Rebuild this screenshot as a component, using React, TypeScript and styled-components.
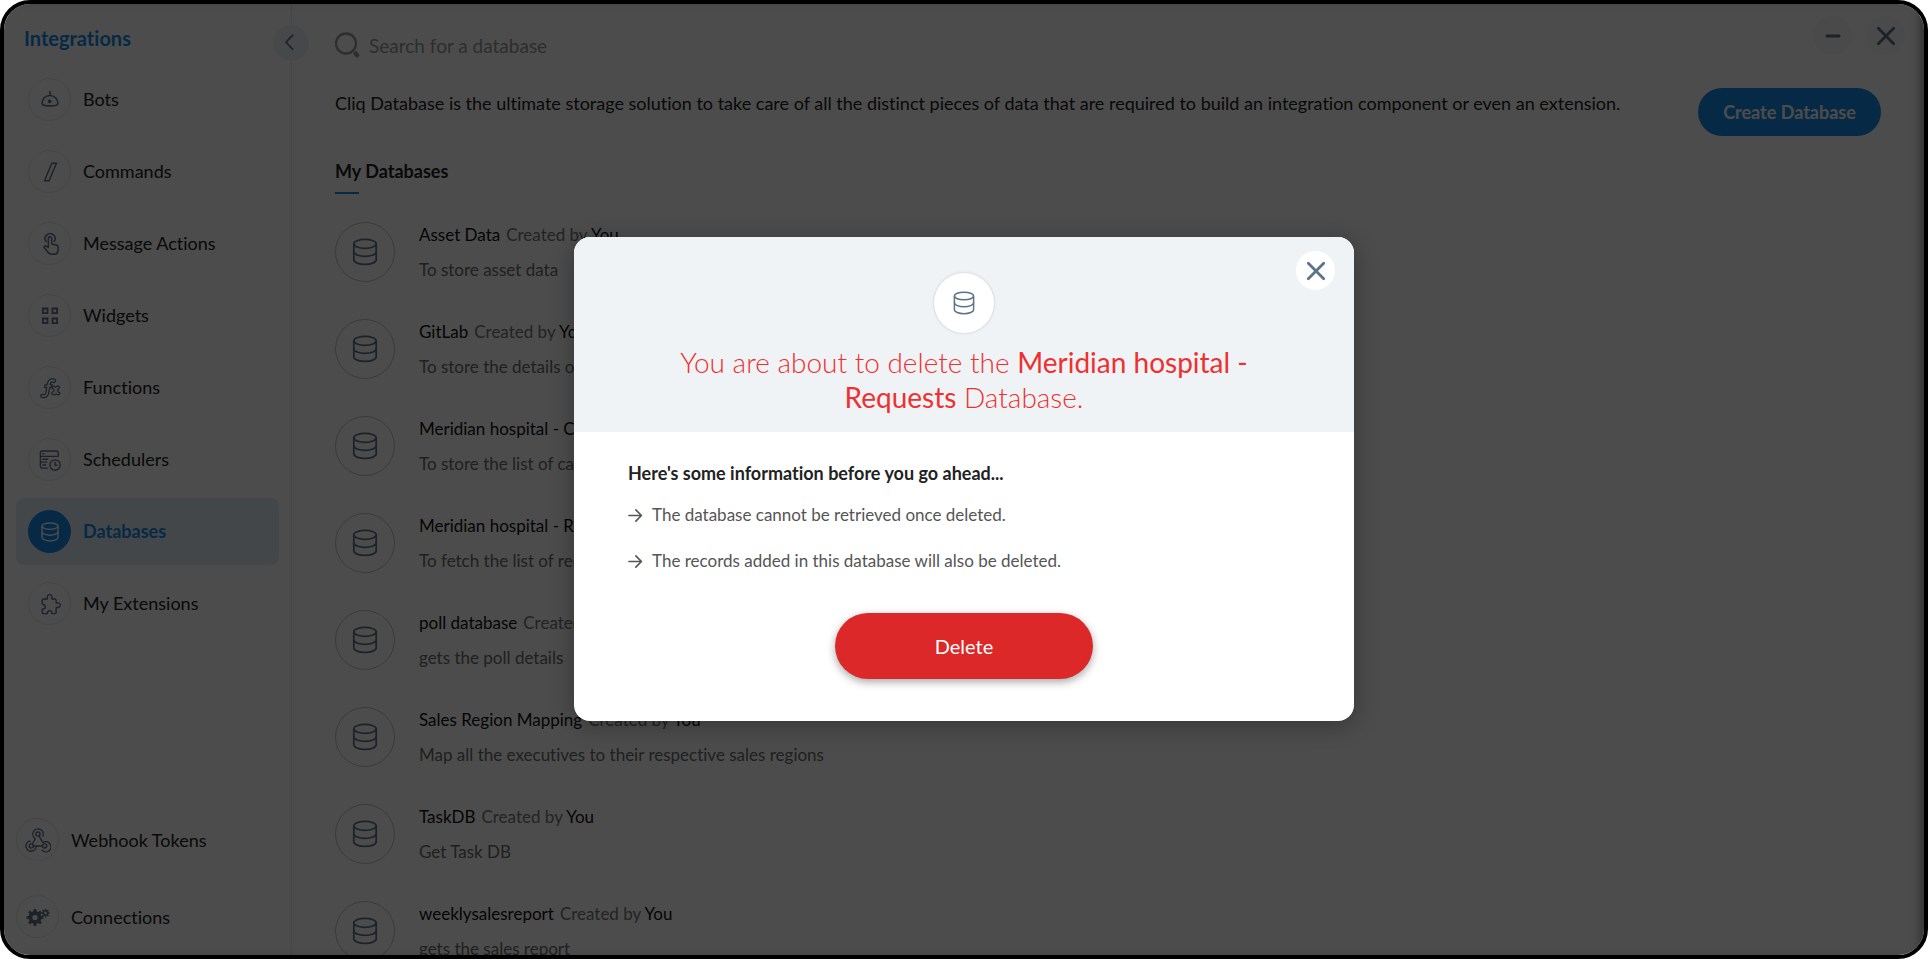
import React from 'react';
import styled, { createGlobalStyle, css } from 'styled-components';

const GlobalStyle = createGlobalStyle`
  *, *::before, *::after { box-sizing: border-box; }
  body {
    margin: 0;
    background: #fff;
    font-family: Lato, "Open Sans", sans-serif;
    font-variant-ligatures: none;
    color: #222;
  }
  h1, h2, h3, p, ul { margin: 0; padding: 0; }
  ul { list-style: none; }
  button, input { font: inherit; border: 0; padding: 0; background: none; color: inherit; }
  button { cursor: pointer; }
  a { color: inherit; text-decoration: none; }
`;

const blue = '#148ce8';
const slate = '#5f7388';

const Frame = styled.div`
  position: relative;
  display: flex;
  height: 100vh;
  min-height: 600px;
  border: 4px solid #000;
  border-radius: 30px;
  overflow: hidden;
  background: #fff;
`;

const Sidebar = styled.aside`
  position: relative;
  display: flex;
  flex-direction: column;
  flex: 0 0 288px;
  padding: 19px 12px 17px;
  border-right: 1px solid #e6e6e6;
`;

const Brand = styled.h1`
  padding: 0 8px;
  font-size: 20px;
  line-height: 30px;
  font-weight: 700;
  color: ${blue};
`;

const Collapse = styled.button`
  position: absolute;
  top: 21px;
  right: -18px;
  display: grid;
  place-items: center;
  width: 36px;
  height: 36px;
  border-radius: 50%;
  background: #edf2f8;
  color: ${slate};
`;

const NavList = styled.ul`
  display: flex;
  flex-direction: column;
  gap: 5px;
  margin-top: 13px;
`;

const FooterList = styled.ul`
  display: flex;
  flex-direction: column;
  gap: 34px;
  margin-top: auto;
`;

const NavLink = styled.a<{ $active?: boolean; $compact?: boolean }>`
  display: flex;
  align-items: center;
  gap: 12px;
  height: ${(p) => (p.$compact ? '43px' : '67px')};
  padding: ${(p) => (p.$compact ? '0' : '0 12px')};
  border-radius: 8px;
  font-size: 18px;
  line-height: 24px;
  ${(p) =>
    p.$active &&
    css`
      background: #e5eff8;
      color: ${blue};
      font-weight: 700;
    `}
`;

const NavLabel = styled.span<{ $compact?: boolean }>`
  padding-bottom: ${(p) => (p.$compact ? '0' : '2px')};
`;

const NavIcon = styled.span<{ $active?: boolean }>`
  display: grid;
  place-items: center;
  width: 43px;
  height: 43px;
  border: 1px solid ${(p) => (p.$active ? blue : '#e6e8ea')};
  border-radius: 50%;
  background: ${(p) => (p.$active ? blue : 'transparent')};
  color: ${(p) => (p.$active ? '#fff' : slate)};
`;

const Main = styled.main`
  flex: 1;
  min-width: 0;
  padding: 12px 0 0 43px;
`;

const TopBar = styled.div`
  display: flex;
  justify-content: space-between;
  align-items: flex-start;
  padding-right: 19px;
`;

const Search = styled.label`
  display: flex;
  align-items: center;
  gap: 9px;
  flex: 1;
  padding-top: 10px;
  color: #999;
`;

const SearchInput = styled.input`
  flex: 1;
  height: 40px;
  padding-bottom: 2px;
  font-size: 19px;
  outline: 0;
  &::placeholder { color: #999; opacity: 1; }
`;

const WindowControls = styled.div`
  display: flex;
  gap: 14px;
`;

const RoundButton = styled.button<{ $bg: string }>`
  display: grid;
  place-items: center;
  width: 39px;
  height: 39px;
  border-radius: 50%;
  background: ${(p) => p.$bg};
  color: ${slate};
`;

const Intro = styled.div`
  display: flex;
  justify-content: space-between;
  align-items: flex-start;
  gap: 24px;
  margin-top: 22px;
  padding-right: 43px;
`;

const IntroText = styled.p`
  font-size: 18px;
  line-height: 30px;
`;

const CreateButton = styled.button`
  flex: none;
  width: 183px;
  height: 48px;
  border-radius: 24px;
  background: ${blue};
  color: #fff;
  font-size: 18px;
  font-weight: 700;
`;

const SectionTitle = styled.h2`
  margin-top: 23px;
  font-size: 18px;
  line-height: 24px;
  font-weight: 700;
  &::after {
    content: '';
    display: block;
    width: 24px;
    height: 2px;
    margin-top: 9px;
    background: ${blue};
  }
`;

const DatabaseList = styled.ul`
  display: flex;
  flex-direction: column;
  gap: 27px;
  margin-top: 23px;
`;

const DatabaseRow = styled.li`
  display: flex;
  align-items: center;
  gap: 24px;
  height: 70px;
`;

const DatabaseBadge = styled.span`
  display: grid;
  place-items: center;
  width: 60px;
  height: 60px;
  border: 1px solid #c4c4c4;
  border-radius: 50%;
  color: ${slate};
`;

const RowText = styled.p<{ $muted?: boolean }>`
  font-size: 17px;
  line-height: 35px;
  color: ${(p) => (p.$muted ? '#6b6b6b' : '#111')};
`;

const Meta = styled.span`
  margin-left: 6px;
  color: #777;
`;

const Owner = styled.span`
  color: #111;
`;

const Overlay = styled.div`
  position: absolute;
  inset: 0;
  display: flex;
  align-items: center;
  justify-content: center;
  padding-bottom: 1px;
  background: rgba(0, 0, 0, 0.7);
  box-shadow: inset -8px 0 8px -4px rgba(0, 0, 0, 0.35);
`;

const Dialog = styled.section`
  position: relative;
  width: 780px;
  max-width: 90%;
  border-radius: 16px;
  overflow: hidden;
  background: #fff;
  box-shadow: 0 4px 24px rgba(0, 0, 0, 0.3);
`;

const DialogHeader = styled.header`
  display: flex;
  flex-direction: column;
  align-items: center;
  padding: 36px 96px 17px;
  background: #eff3f6;
`;

const DialogBadge = styled.span`
  display: grid;
  place-items: center;
  width: 60px;
  height: 60px;
  border-radius: 50%;
  background: #fff;
  color: ${slate};
  box-shadow: 0 0 3px rgba(0, 0, 0, 0.18);
`;

const DialogTitle = styled.h2`
  margin-top: 12px;
  font-size: 28px;
  line-height: 35px;
  font-weight: 300;
  text-align: center;
  color: #ef3030;
  strong { font-weight: 400; }
`;

const CloseSlot = styled.div`
  position: absolute;
  top: 14px;
  right: 19px;
`;

const DialogBody = styled.div`
  display: flex;
  flex-direction: column;
  padding: 29px 54px 42px;
`;

const InfoTitle = styled.h3`
  font-size: 18px;
  line-height: 24px;
  font-weight: 700;
`;

const InfoList = styled.ul`
  display: flex;
  flex-direction: column;
  gap: 22px;
  margin-top: 18px;
`;

const InfoItem = styled.li`
  display: flex;
  align-items: center;
  gap: 9px;
  font-size: 17px;
  line-height: 24px;
  color: #555;
`;

const DeleteButton = styled.button`
  align-self: center;
  width: 258px;
  height: 66px;
  margin-top: 40px;
  border-radius: 33px;
  background: #dc2828;
  color: #fff;
  font-size: 20px;
  box-shadow: 0 3px 8px rgba(0, 0, 0, 0.35);
`;

type IconProps = { size?: number; weight?: number; children?: React.ReactNode };

const Icon = ({ size = 24, weight = 1.5, children }: IconProps) => (
  <svg width={size} height={size} viewBox="0 0 24 24" fill="none" stroke="currentColor" strokeWidth={weight} strokeLinecap="round" strokeLinejoin="round" aria-hidden="true">
    {children}
  </svg>
);

const DatabaseIcon = ({ size = 24, weight = 1.5 }: IconProps) => (
  <Icon size={size} weight={weight}>
    <ellipse cx="12" cy="5" rx="9.6" ry="3.8" />
    <path d="M2.400 5v13.700c0 2.200 4.300 4 9.600 4s9.600-1.800 9.600-4V5" />
    <path d="M2.400 11.800c0 2.200 4.300 4 9.600 4s9.600-1.800 9.600-4" />
  </Icon>
);

const BotIcon = () => (
  <Icon size={20} weight={1.9}>
    <path d="M12 6V2" />
    <path d="M2.5 16.500c0-6 4-10 9.500-10s9.500 4 9.500 10c0 1.600-3 2.500-9.500 2.500s-9.500-.9-9.500-2.500z" />
    <circle cx="11.500" cy="13.500" r="1.300" fill="currentColor" />
  </Icon>
);

const SlashIcon = () => (
  <Icon size={22} weight={1.6}>
    <path d="M14 2.500h5L11 21.500H6z" strokeLinejoin="miter" />
  </Icon>
);

const TapIcon = () => (
  <Icon size={24} weight={1.500}>
    <path d="M8 9.500a5 5 0 1 1 8.200 0" />
    <path d="M10.300 15.500V6.400a1.700 1.700 0 0 1 3.400 0v5.500l4.500 1c1.400.3 2.200 1.300 2.100 2.600l-.4 3.400c-.2 1.900-1.500 3.300-3.300 3.300h-3.200c-1.300 0-2.400-.6-3.100-1.700L6.200 15.800c-.7-1.200.6-2.400 1.800-1.700z" />
  </Icon>
);

const WidgetsIcon = () => (
  <Icon size={20} weight={2.200}>
    <path d="M3.500 3h5.500v5.500h-5.500zM15 3h5.500v5.500h-5.500zM3.500 15h5.500v5.500h-5.500zM15 15h5.500v5.500h-5.500z" strokeLinejoin="miter" />
  </Icon>
);

const FunctionIcon = () => (
  <Icon size={22} weight={1.400}>
    <path d="M17.300 2.500c-4-1.600-7.200.1-8 4l-.4 2H6.600l-.5 2.700h2.300l-1.100 6c-.3 1.900-1.300 2.400-2.800 1.900-1.300-.4-2.600.3-2.600 1.500 0 1.600 1.800 2 3.600 1.900 3-.2 4.500-2 5-4.900l1.200-6.400h2.300l.5-2.700h-2.300l.3-1.400c.3-1.500 1.300-1.900 2.700-1.400 1.300.5 2.400-.1 2.800-1.100.4-.9.100-1.700-.7-2.100z" />
    <path d="M14.300 11.200c.7-1.900 2.900-1.500 3.800 0 .9-1.300 2.600-1.900 3.800-.8 1 1 .2 2.300-1.100 2.800l-.7 1.300 1 1.900c1.400.1 1.900 1 1.400 2-.7 1.400-2.800 1.400-3.900-.3-1.200 1.500-3 2-4.200.9-1.100-1.100-.4-2.400 1.200-2.900l.8-1.400-.8-1.600c-1-.2-1.600-.9-1.300-1.900z" />
  </Icon>
);

const SchedulerIcon = () => (
  <Icon size={22} weight={1.500}>
    <path d="M21 8V4a1.800 1.800 0 0 0-1.800-1.800H3.300A1.800 1.800 0 0 0 1.500 4v15a1.800 1.800 0 0 0 1.800 1.800H9M1.500 8H21M1.500 14.300h7M4.300 5.200h1M4.300 11.200h5.200M4.300 17.500h3" />
    <circle cx="17.500" cy="17.500" r="5.700" />
    <path d="M17.500 14.300v3.400h2.200" />
  </Icon>
);

const PuzzleIcon = () => (
  <Icon size={22} weight={1.500}>
    <path d="M5 6.500h3.800c.5 0 .7-.4.5-.9-.9-1.900.3-3.800 2.300-3.800s3.200 1.900 2.300 3.800c-.2.5 0 .9.500.9h2.800c.9 0 1.500.6 1.500 1.500v2.500c0 .5.400.7.900.5 1.800-.8 3.600.4 3.600 2.300s-1.800 3.100-3.600 2.300c-.5-.2-.9 0-.9.500v5c0 .9-.6 1.400-1.500 1.400h-2.400c-.5 0-.8-.3-.8-.8 0-1.500-.9-2.500-2.300-2.500s-2.400 1-2.400 2.500c0 .5-.3.800-.8.800H5c-.9 0-1.500-.6-1.500-1.400v-3c0-.5.300-.7.800-.7 1.500-.1 2.500-1.100 2.500-2.500s-1-2.400-2.500-2.500c-.5 0-.8-.3-.8-.8V8c0-.9.600-1.500 1.500-1.500z" />
  </Icon>
);

const WebhookIcon = () => (
  <Icon size={26} weight={1.300}>
    <circle cx="12" cy="6.500" r="1.900" />
    <circle cx="5.800" cy="17.500" r="1.900" />
    <circle cx="18.200" cy="17.500" r="1.900" />
    <path d="M16.400 8.500A4.800 4.800 0 1 0 9.500 10.600L7 15.500M13 8.400l3.500 6.100A4.700 4.700 0 1 1 15.800 21.500M7.900 17.500h8.100M4.500 12.900A4.800 4.800 0 1 0 10.500 17.500" />
  </Icon>
);

const gear = (cx: number, cy: number, outer: number, inner: number) => {
  const teeth = 8;
  const points: string[] = [];
  for (let i = 0; i < teeth; i++) {
    [[-0.3, inner], [-0.2, outer], [0.2, outer], [0.3, inner]].forEach(([offset, r]) => {
      const a = ((i + offset) / teeth) * Math.PI * 2;
      points.push((cx + Math.cos(a) * r).toFixed(2) + ' ' + (cy + Math.sin(a) * r).toFixed(2));
    });
  }
  return 'M' + points.join('L') + 'z';
};

const ring = (cx: number, cy: number, r: number) =>
  `M${cx - r} ${cy}a${r} ${r} 0 1 0 ${r * 2} 0a${r} ${r} 0 1 0 ${-r * 2} 0z`;

const GearsIcon = () => (
  <svg width={24} height={24} viewBox="0 0 24 24" fill="currentColor" fillRule="evenodd" aria-hidden="true">
    <path d={gear(9, 12.500, 8.500, 6.500) + ring(9, 12.500, 2.600)} />
    <path d={gear(19.500, 8, 4.200, 3) + ring(19.500, 8, 1.400)} />
  </svg>
);

const SearchIcon = () => (
  <svg width={25} height={28} viewBox="0 0 25 28" fill="none" stroke="currentColor" strokeLinecap="round" aria-hidden="true">
    <circle cx="11" cy="11.500" r="10" strokeWidth="2.300" />
    <path d="M20.700 21.500l1.300 1.700" strokeWidth="4.500" />
  </svg>
);

const CloseIcon = () => (
  <Icon size={24} weight={2.800}>
    <path d="M4.300 4.300l15.400 15.400M19.700 4.300L4.300 19.700" />
  </Icon>
);

const navItems = [
  { label: 'Bots', icon: <BotIcon /> },
  { label: 'Commands', icon: <SlashIcon /> },
  { label: 'Message Actions', icon: <TapIcon /> },
  { label: 'Widgets', icon: <WidgetsIcon /> },
  { label: 'Functions', icon: <FunctionIcon /> },
  { label: 'Schedulers', icon: <SchedulerIcon /> },
  { label: 'Databases', icon: <DatabaseIcon size={20} weight={1.700} />, active: true },
  { label: 'My Extensions', icon: <PuzzleIcon /> },
];

const footerItems = [
  { label: 'Webhook Tokens', icon: <WebhookIcon /> },
  { label: 'Connections', icon: <GearsIcon /> },
];

const databases = [
  { name: 'Asset Data', description: 'To store asset data' },
  { name: 'GitLab', description: 'To store the details of the commits' },
  { name: 'Meridian hospital - Cases', description: 'To store the list of cases' },
  { name: 'Meridian hospital - Requests', description: 'To fetch the list of requests' },
  { name: 'poll database', description: 'gets the poll details' },
  { name: 'Sales Region Mapping', description: 'Map all the executives to their respective sales regions' },
  { name: 'TaskDB', description: 'Get Task DB' },
  { name: 'weeklysalesreport', description: 'gets the sales report' },
];

const warnings = [
  'The database cannot be retrieved once deleted.',
  'The records added in this database will also be deleted.',
];

export default function App() {
  return (
    <>
      <GlobalStyle />
      <Frame>
        <Sidebar>
          <Brand>Integrations</Brand>
          <NavList>
            {navItems.map((item) => (
              <li key={item.label}>
                <NavLink href="#" $active={item.active}>
                  <NavIcon $active={item.active}>{item.icon}</NavIcon>
                  <NavLabel>{item.label}</NavLabel>
                </NavLink>
              </li>
            ))}
          </NavList>
          <FooterList>
            {footerItems.map((item) => (
              <li key={item.label}>
                <NavLink href="#" $compact>
                  <NavIcon>{item.icon}</NavIcon>
                  <NavLabel $compact>{item.label}</NavLabel>
                </NavLink>
              </li>
            ))}
          </FooterList>
          <Collapse aria-label="Collapse sidebar">
            <Icon size={20} weight={2}>
              <path d="M14 2.500L6 11l8 8.500" />
            </Icon>
          </Collapse>
        </Sidebar>
        <Main>
          <TopBar>
            <Search>
              <SearchIcon />
              <SearchInput type="text" aria-label="Search for a database" placeholder="Search for a database" />
            </Search>
            <WindowControls>
              <RoundButton $bg="#f7f7f7" aria-label="Minimize">
                <Icon size={24} weight={3}>
                  <path d="M6 12h12" />
                </Icon>
              </RoundButton>
              <RoundButton $bg="#f7f7f7" aria-label="Close">
                <CloseIcon />
              </RoundButton>
            </WindowControls>
          </TopBar>
          <Intro>
            <IntroText>
              Cliq Database is the ultimate storage solution to take care of all the distinct pieces of data that are required to build an integration component or even an extension.
            </IntroText>
            <CreateButton>Create Database</CreateButton>
          </Intro>
          <SectionTitle>My Databases</SectionTitle>
          <DatabaseList>
            {databases.map((db) => (
              <DatabaseRow key={db.name}>
                <DatabaseBadge>
                  <DatabaseIcon size={28} />
                </DatabaseBadge>
                <div>
                  <RowText>
                    {db.name}
                    <Meta>
                      Created by <Owner>You</Owner>
                    </Meta>
                  </RowText>
                  <RowText $muted>{db.description}</RowText>
                </div>
              </DatabaseRow>
            ))}
          </DatabaseList>
        </Main>
        <Overlay>
          <Dialog role="dialog" aria-modal="true" aria-labelledby="dialog-title">
            <DialogHeader>
              <DialogBadge>
                <DatabaseIcon size={24} />
              </DialogBadge>
              <DialogTitle id="dialog-title">
                You are about to delete the <strong>Meridian hospital - Requests</strong> Database.
              </DialogTitle>
              <CloseSlot>
                <RoundButton $bg="#fff" aria-label="Close dialog">
                  <CloseIcon />
                </RoundButton>
              </CloseSlot>
            </DialogHeader>
            <DialogBody>
              <InfoTitle>Here's some information before you go ahead...</InfoTitle>
              <InfoList>
                {warnings.map((text) => (
                  <InfoItem key={text}>
                    <Icon size={15} weight={2.600}>
                      <path d="M1.500 12h20M12.500 3l9 9-9 9" />
                    </Icon>
                    {text}
                  </InfoItem>
                ))}
              </InfoList>
              <DeleteButton>Delete</DeleteButton>
            </DialogBody>
          </Dialog>
        </Overlay>
      </Frame>
    </>
  );
}
